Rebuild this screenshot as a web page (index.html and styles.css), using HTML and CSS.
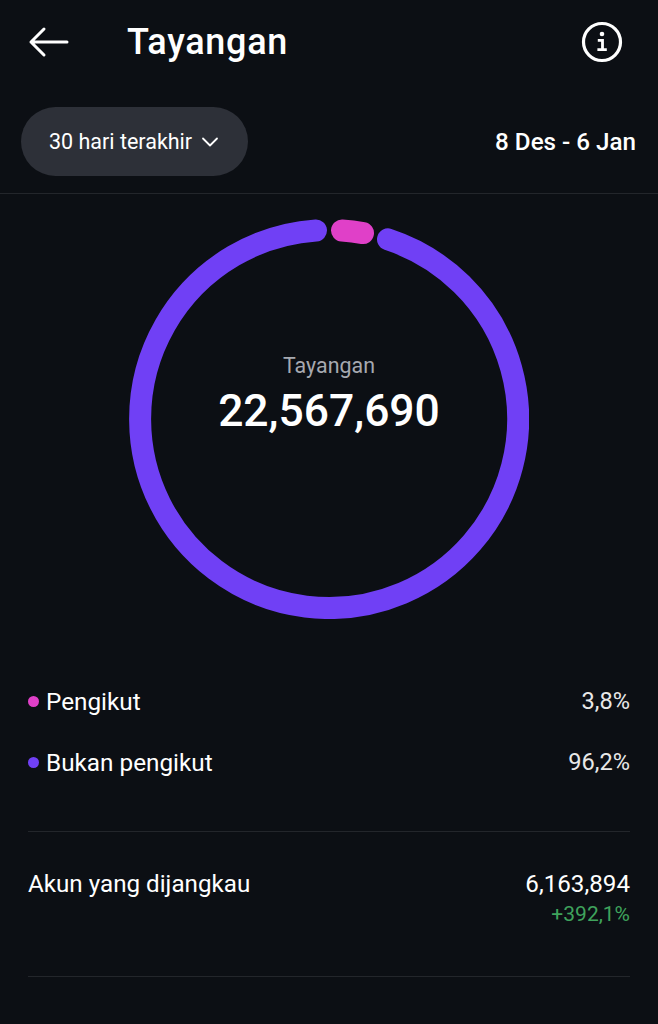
FILE: index.html
```html
<!DOCTYPE html>
<html lang="id">
<head>
    <meta charset="UTF-8">
    <meta name="viewport" content="width=device-width, initial-scale=1.0">
    <title>Tayangan</title>
    <link rel="stylesheet" href="styles.css">
</head>
<body>
    <header class="topbar">
        <svg class="back-icon" width="42" height="32" viewBox="0 0 42 32" fill="none" stroke="#fff" stroke-width="3" stroke-linecap="round" stroke-linejoin="round">
            <path d="M16 3 L3 16 L16 29 M3 16 H39"/>
        </svg>
        <h1 class="title">Tayangan</h1>
        <svg class="info-icon" width="42" height="42" viewBox="0 0 42 42" fill="none">
            <circle cx="21" cy="21" r="18.5" stroke="#fff" stroke-width="3.2"/>
            <circle cx="21" cy="13" r="2.3" fill="#fff"/>
            <path d="M16.8 19.4 H21.5 V28 M16.4 28.6 H25.8" stroke="#fff" stroke-width="2.8"/>
        </svg>
    </header>

    <div class="filter-row">
        <div class="pill">
            <span>30 hari terakhir</span>
            <svg width="18" height="12" viewBox="0 0 18 12" fill="none" stroke="#fff" stroke-width="1.8" stroke-linecap="round" stroke-linejoin="round">
                <path d="M2 2.5 L9 9.5 L16 2.5"/>
            </svg>
        </div>
        <div class="date-range">8 Des - 6 Jan</div>
    </div>

    <section class="chart">
        <svg class="ring" width="400" height="400" viewBox="0 0 400 400" fill="none" stroke-linecap="round" stroke-width="22">
            <path stroke="#7040f5" d="M 259 20.4 A 189 189 0 1 1 187 11.45"/>
            <path stroke="#e040c8" d="M 213 11.45 A 189 189 0 0 1 234 14.1"/>
        </svg>
        <div class="chart-label">
            <div class="chart-caption">Tayangan</div>
            <div class="chart-total">22,567,690</div>
        </div>
    </section>

    <ul class="legend">
        <li class="legend-row">
            <span class="dot dot-pink"></span>
            <span class="legend-name">Pengikut</span>
            <span class="legend-value">3,8%</span>
        </li>
        <li class="legend-row">
            <span class="dot dot-purple"></span>
            <span class="legend-name">Bukan pengikut</span>
            <span class="legend-value">96,2%</span>
        </li>
    </ul>

    <section class="reach">
        <div class="reach-name">Akun yang dijangkau</div>
        <div class="reach-numbers">
            <div class="reach-value">6,163,894</div>
            <div class="reach-change">+392,1%</div>
        </div>
    </section>
</body>
</html>
```

FILE: styles.css
```css
html, body {
    margin: 0;
    padding: 0;
}

body {
    background-color: #0c0f14;
    color: #ffffff;
    font-family: Roboto, "Liberation Sans", sans-serif;
    height: 1024px;
    overflow: hidden;
}

.topbar {
    display: flex;
    align-items: center;
    height: 84px;
    padding: 0 35px 0 28px;
}

.back-icon {
    flex: none;
}

.title {
    flex: 1;
    margin: 0 0 0 57px;
    font-size: 36px;
    font-weight: 500;
    letter-spacing: 0.7px;
}

.filter-row {
    display: flex;
    justify-content: space-between;
    align-items: center;
    margin-top: 23px;
    padding: 0 22px 17px 21px;
    border-bottom: 1px solid #23262b;
}

.pill {
    display: flex;
    align-items: center;
    gap: 9px;
    box-sizing: border-box;
    width: 227px;
    height: 69px;
    padding-left: 28px;
    background-color: #2d3038;
    border-radius: 35px;
    font-size: 21.5px;
}

.date-range {
    font-size: 24.2px;
    font-weight: 500;
}

.chart {
    position: relative;
    width: 400px;
    height: 400px;
    margin: 25px 0 0 129px;
}

.ring {
    display: block;
}

.chart-label {
    position: absolute;
    top: 134px;
    left: 0;
    right: 0;
    text-align: center;
}

.chart-caption {
    color: #a6a9b0;
    font-size: 21.4px;
}

.chart-total {
    margin-top: 7px;
    font-size: 44.4px;
    font-weight: 500;
}

.legend {
    list-style: none;
    margin: 59px 28px 0;
    padding: 0 0 31px;
    border-bottom: 1px solid #23262b;
}

.legend-row {
    display: flex;
    align-items: center;
    height: 46px;
    margin-bottom: 15px;
    font-size: 24.3px;
}

.dot {
    width: 11px;
    height: 11px;
    margin-right: 7px;
    border-radius: 50%;
}

.dot-pink {
    background-color: #e040c8;
}

.dot-purple {
    background-color: #7040f5;
}

.legend-name {
    flex: 1;
}

.legend-value {
    font-size: 23.6px;
    color: #e8e8e8;
}

.reach {
    display: flex;
    justify-content: space-between;
    margin: 0 28px;
    padding: 38px 0 50px;
    border-bottom: 1px solid #23262b;
    font-size: 24.2px;
}

.reach-numbers {
    text-align: right;
}

.reach-change {
    margin-top: 4px;
    font-size: 21px;
    color: #3fa35c;
}
```
